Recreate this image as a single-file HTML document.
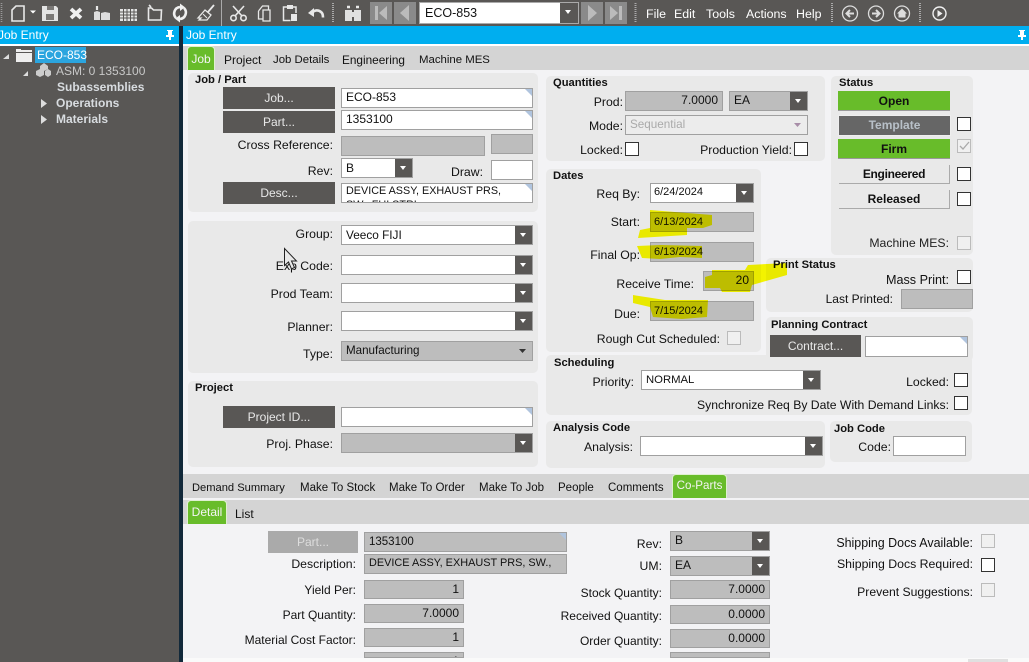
<!DOCTYPE html>
<html><head><meta charset="utf-8"><style>
html,body{margin:0;padding:0;overflow:hidden;width:1029px;height:662px}
body{font:12px "Liberation Sans",Arial,sans-serif;color:#111}
#root{position:absolute;left:0;top:0;width:1029px;height:662px;overflow:hidden;background:#f3f3f5}
#root div,#root svg{position:absolute;box-sizing:border-box}
.t{line-height:14px;white-space:nowrap;height:14px}
.l{line-height:14px;white-space:nowrap;height:14px;text-align:right;width:220px;font-size:12.25px}
.l.x{font-size:12px}
.h{font-weight:bold;font-size:11.2px;line-height:14px;white-space:nowrap;height:14px}
.p{background:#e9e9e9;border-radius:5px}
.b{background:#595755;color:#e8e8e8;text-align:center;line-height:22px;height:22px}
.f{background:#fff;border:1px solid #a0a0a0;padding:0 4px;line-height:17px;white-space:nowrap;overflow:hidden;height:20px}
.g{background:#bdbdbd;border:1px solid #a0a0a0;padding:0 4px;line-height:17px;white-space:nowrap;overflow:hidden;height:20px}
.r{text-align:right}
.n:after{content:"";position:absolute;right:-1px;top:-1px;border-top:9px solid #b0c4de;border-left:9px solid transparent}
.a{position:absolute;right:0;top:0;bottom:0;width:17px;background:#595755}
.a:after{content:"";position:absolute;left:5px;top:7px;border-top:4px solid #fff;border-left:3.5px solid transparent;border-right:3.5px solid transparent}
.c{width:14px;height:14px;background:#fff;border:1px solid #333}
.d{width:14px;height:14px;background:#f0f0f0;border:1px solid #bbb}
.w{color:#fff}
.tab{background:#68bc2a;border:1px solid #dff0d0;border-bottom:none;border-radius:4px 4px 0 0;color:#f4f4f4;text-align:center}
.s{font-weight:bold;text-align:center}
.m{font-weight:bold;color:#d8dce0}
.dt{font-size:11px;padding-left:3px}
</style></head><body><div id="root">

<!-- toolbar -->
<div style="left:0;top:0;width:1029px;height:26px;background:#595755"></div>
<svg style="left:0;top:0" width="420" height="26" fill="none" stroke="#e8e8e8" stroke-width="1.6">
<path d="M1.500 3v19" stroke="#999" stroke-dasharray="1 1"/>
<path d="M16 6h8v15H12V10z"/><path d="M30 10.500h6l-3 3z" fill="#fff" stroke="none"/>
<path d="M42 6h14l2 2v13H42z" fill="#e4e4e4" stroke="none"/><path d="M47 6h7v4h-7zM46 14h8v6h-8z" fill="#7a7876" stroke="none"/>
<path d="M71 9l10 9M81 9l-10 9" stroke-width="3.800" stroke="#f0f0f0"/>
<path d="M94 12l3-1 3 1v8h-6zM101 13l4-1 5 1v7h-9z" fill="#ddd" stroke="none"/><path d="M97 6v4" stroke-width="2.200"/>
<rect x="120" y="9" width="17" height="12" fill="#e4e4e4" stroke="none"/>
<path d="M120 12h17M120 15h17M120 18h17M123.500 9v12M127 9v12M130.500 9v12M134 9v12" stroke="#595755" stroke-width="1"/>
<path d="M148.500 8v12h12.500l.5-10h-8l-2-2zM149 5l2 2"/>
<path d="M176 18A6.500 6.500 0 0 1 180 7M184 8A6.500 6.500 0 0 1 180 19" stroke-width="2.600" stroke="#f0f0f0"/><path d="M180 3.500v7.500l5-3.700zM180 15v7.500l-5-3.700z" fill="#f0f0f0" stroke="none"/>
<path d="M214 5l-6 7" stroke-width="1.800"/><path d="M205 10l6 5-4 5h-8l2-2-3 0z" stroke-width="1.300"/><path d="M203 14l4 4" stroke-width="1"/>
<path d="M221.500 0v26" stroke="#aaa" stroke-width="1"/>
<path d="M233 6l9 10M244 6l-9 10" stroke-width="1.600"/><circle cx="233.500" cy="18" r="2.700"/><circle cx="243.500" cy="18" r="2.700"/>
<path d="M258.500 11l4-5h6v4M258.500 11v8h4" stroke-width="1.300"/><path d="M263 10h7v11h-7z" stroke-width="1.300"/>
<path d="M287 7h-3.500v13.500h7M293 7h3v6" stroke-width="1.500"/><path d="M287 5h6v4h-6zM291 14h6v7h-6z" fill="#e8e8e8" stroke="none"/>
<path d="M312 13a6 6 0 0 1 9-1c1.500 1 2 3 2 5.500" stroke-width="2.600"/><path d="M308 13l6-5v9z" fill="#e8e8e8" stroke="none"/>
<path d="M333 3v20" stroke="#aaa" stroke-dasharray="1 1" stroke-width="2"/>
<path d="M345 10h7v11h-7zM354 10h7v11h-7zM352 12h2v5h-2z" fill="#e0e0e0" stroke="none"/><path d="M347 7h3M356 7h3" stroke-width="2.400"/>
</svg>
<div style="left:370px;top:2px;width:22px;height:22px;background:#8a8a8a"></div>
<div style="left:394px;top:2px;width:22px;height:22px;background:#8a8a8a"></div>
<svg style="left:370px;top:2px" width="46" height="22" fill="#bbb"><path d="M5 4h3v14H5zM17 4v14l-8-7zM39 3v16l-9-8z"/></svg>
<div style="left:419px;top:2px;width:160px;height:22px;background:#fff;border:1px solid #aaa"><div class="t" style="left:5px;top:3px;font-size:12.500px;color:#111">ECO-853</div><div class="a" style="width:18px"></div></div>
<div style="left:581px;top:2px;width:22px;height:22px;background:#8a8a8a"></div>
<div style="left:605px;top:2px;width:22px;height:22px;background:#8a8a8a"></div>
<svg style="left:581px;top:2px" width="46" height="22" fill="#bbb"><path d="M7 3v16l9-8zM29 4v14l8-7zM38 4h3v14h-3z"/></svg>
<svg style="left:630px;top:0" width="399" height="26" fill="none" stroke="#ddd">
<path d="M5.500 3v20M202 3v20M290 3v20" stroke-dasharray="1 1" stroke-width="2" stroke="#aaa"/>
<circle cx="220" cy="13.500" r="7.500" stroke-width="1.300"/><path d="M224 13.500h-7M220 10l-3.500 3.500 3.500 3.500" stroke-width="2"/>
<circle cx="246" cy="13.500" r="7.500" stroke-width="1.300"/><path d="M242 13.500h7M246 10l3.500 3.500-3.500 3.500" stroke-width="2"/>
<circle cx="272" cy="13.500" r="7.500" stroke-width="1.300"/><path d="M272 8.500l-5 5h1.500v4h7v-4h1.500z" fill="#ddd" stroke="none"/>
<circle cx="309.500" cy="13.500" r="6.500" stroke-width="1.400" stroke="#f0f0f0"/><path d="M307.500 10v7l5-3.500z" fill="#f0f0f0" stroke="none"/>
</svg>
<div class="t w" style="left:646px;top:7px;font-size:12.400px">File</div>
<div class="t w" style="left:674px;top:7px;font-size:12.400px">Edit</div>
<div class="t w" style="left:706px;top:7px;font-size:12.400px">Tools</div>
<div class="t w" style="left:746px;top:7px;font-size:12.400px">Actions</div>
<div class="t w" style="left:796px;top:7px;font-size:12.400px">Help</div>

<!-- left panel -->
<div style="left:0;top:26px;width:179px;height:636px;background:#595755"></div>
<div style="left:179px;top:26px;width:4px;height:636px;background:#12293a"></div>
<div style="left:0;top:26px;width:179px;height:18px;background:#00aeef"></div>
<div style="left:0;top:44px;width:179px;height:2px;background:#fff"></div>
<div class="t w" style="left:-2px;top:28px">Job Entry</div>
<svg style="left:164px;top:29px" width="12" height="12" fill="#fff"><path d="M3 1h6v1H8v4h2v2H7v3H5V8H2V6h2V2H3z"/></svg>
<svg style="left:0;top:46px" width="60" height="80">
<path d="M9 8v5H3z" fill="#ddd"/><path d="M28 25v5h-5z" fill="#ddd"/>
<path d="M16 3h5v1h11v2H16zM16 7h16v9H16z" fill="#eee"/>
<path d="M36 25l4-2 4 2v4l-4 2-4-2zM40 20l4-3 4 3v3l-4 2-4-2zM45 25l3-2 3 2v4l-3 2-3-2z" fill="#ccc"/>
<path d="M41 53l6 4.500-6 4.500zM41 69l6 4.500-6 4.500z" fill="#ddd"/>
</svg>
<div style="left:35px;top:47px;width:51px;height:16px;background:#2ba5df"></div>
<div class="t w" style="left:37px;top:48px">ECO-853</div>
<div class="t" style="left:56px;top:64px;color:#c8c8c8">ASM: 0 1353100</div>
<div class="t m" style="left:57px;top:80px">Subassemblies</div>
<div class="t m" style="left:56px;top:96px">Operations</div>
<div class="t m" style="left:56px;top:112px">Materials</div>

<!-- main header -->
<div style="left:183px;top:26px;width:846px;height:18px;background:#00aeef"></div>
<div style="left:183px;top:44px;width:846px;height:2px;background:#fff"></div>
<div class="t w" style="left:186px;top:28px">Job Entry</div>
<svg style="left:1016px;top:29px" width="12" height="12" fill="#fff"><path d="M3 1h6v1H8v4h2v2H7v3H5V8H2V6h2V2H3z"/></svg>

<div style="left:183px;top:46px;width:846px;height:24px;background:#d4d4d4"></div>
<div class="tab" style="left:187px;top:46px;width:28px;height:24px;line-height:24px">Job</div>
<div class="t" style="left:224px;top:53px">Project</div>
<div class="t" style="left:273px;top:53px;font-size:11.400px">Job Details</div>
<div class="t" style="left:342px;top:53px;font-size:11.800px">Engineering</div>
<div class="t" style="left:419px;top:53px;font-size:11.400px">Machine MES</div>

<!-- Job / Part -->
<div class="p" style="left:188px;top:73px;width:350px;height:139px"></div>
<div class="h" style="left:195px;top:73px">Job / Part</div>
<div class="b" style="left:223px;top:87px;width:112px">Job...</div>
<div class="f n" style="left:341px;top:88px;width:192px">ECO-853</div>
<div class="b" style="left:223px;top:111px;width:112px">Part...</div>
<div class="f n" style="left:341px;top:110px;width:192px">1353100</div>
<div class="l" style="left:113px;top:138px">Cross Reference:</div>
<div class="g" style="left:341px;top:136px;width:144px"></div>
<div class="g" style="left:491px;top:134px;width:42px"></div>
<div class="l" style="left:113px;top:164px">Rev:</div>
<div class="f" style="left:341px;top:158px;width:72px;line-height:18px">B<div class="a"></div></div>
<div class="l" style="left:263px;top:165px">Draw:</div>
<div class="f" style="left:491px;top:160px;width:42px"></div>
<div class="b" style="left:223px;top:182px;width:112px">Desc...</div>
<div class="f n" style="left:341px;top:183px;width:192px;line-height:14px;white-space:normal;font-size:10.800px">DEVICE ASSY, EXHAUST PRS,<br>SW., FUI STRI</div>

<!-- Group -->
<div class="p" style="left:188px;top:221px;width:350px;height:152px"></div>
<div class="l" style="left:113px;top:227px">Group:</div>
<div class="f" style="left:341px;top:225px;width:192px;line-height:19px;font-size:11.800px">Veeco FIJI<div class="a"></div></div>
<div class="l" style="left:113px;top:259px">Exp Code:</div>
<div class="f" style="left:341px;top:255px;width:192px"><div class="a"></div></div>
<div class="l" style="left:113px;top:287px">Prod Team:</div>
<div class="f" style="left:341px;top:283px;width:192px"><div class="a"></div></div>
<div class="l" style="left:113px;top:320px">Planner:</div>
<div class="f" style="left:341px;top:311px;width:192px"><div class="a"></div></div>
<div class="l" style="left:113px;top:347px">Type:</div>
<div class="g" style="left:341px;top:341px;width:192px;font-size:11.600px;line-height:18px">Manufacturing<svg style="right:6px;top:7px" width="7" height="4" fill="#333"><path d="M0 0h7L3.500 4z"/></svg></div>

<!-- Project -->
<div class="p" style="left:188px;top:381px;width:350px;height:86px"></div>
<div class="h" style="left:195px;top:381px">Project</div>
<div class="b" style="left:223px;top:406px;width:112px">Project ID...</div>
<div class="f n" style="left:341px;top:407px;width:192px"></div>
<div class="l" style="left:113px;top:437px">Proj. Phase:</div>
<div class="g" style="left:341px;top:433px;width:192px"><div class="a"></div></div>

<!-- Quantities -->
<div class="p" style="left:546px;top:76px;width:279px;height:85px"></div>
<div class="h" style="left:553px;top:76px">Quantities</div>
<div class="l" style="left:403px;top:95px">Prod:</div>
<div class="g r" style="left:625px;top:91px;width:98px">7.0000</div>
<div class="g" style="left:729px;top:91px;width:79px">EA<div class="a"></div></div>
<div class="l" style="left:403px;top:119px">Mode:</div>
<div class="f" style="left:625px;top:115px;width:183px;background:#ececec;color:#aaa;font-size:11.700px;line-height:18px">Sequential<svg style="right:6px;top:7px" width="7" height="4" fill="#a88ea8"><path d="M0 0h7L3.500 4z"/></svg></div>
<div class="l" style="left:403px;top:143px">Locked:</div>
<div class="c" style="left:625px;top:142px"></div>
<div class="l" style="left:572px;top:143px">Production Yield:</div>
<div class="c" style="left:794px;top:142px"></div>

<!-- Dates -->
<div class="p" style="left:546px;top:169px;width:215px;height:183px"></div>
<div class="h" style="left:553px;top:169px">Dates</div>
<div class="l" style="left:420px;top:187px">Req By:</div>
<div class="f dt" style="left:650px;top:183px;width:104px">6/24/2024<div class="a"></div></div>
<div class="l" style="left:420px;top:215px">Start:</div>
<div class="g dt" style="left:650px;top:212px;width:104px;line-height:18px">6/13/2024</div>
<div class="l" style="left:420px;top:248px">Final Op:</div>
<div class="g dt" style="left:650px;top:242px;width:104px;line-height:18px">6/13/2024</div>
<div class="l" style="left:474px;top:277px">Receive Time:</div>
<div class="g r" style="left:703px;top:271px;width:51px">20</div>
<div class="l" style="left:420px;top:307px">Due:</div>
<div class="g dt" style="left:650px;top:301px;width:104px;line-height:18px">7/15/2024</div>
<div class="l" style="left:500px;top:332px">Rough Cut Scheduled:</div>
<div class="d" style="left:727px;top:331px"></div>

<!-- Scheduling -->
<div class="p" style="left:546px;top:355px;width:426px;height:60px"></div>
<div class="h" style="left:554px;top:356px">Scheduling</div>
<div class="l" style="left:414px;top:375px">Priority:</div>
<div class="f" style="left:641px;top:370px;width:180px;font-size:11.300px;line-height:18px">NORMAL<div class="a"></div></div>
<div class="l" style="left:729px;top:375px">Locked:</div>
<div class="c" style="left:954px;top:373px"></div>
<div class="l" style="left:649px;top:398px;width:300px;font-size:12.200px">Synchronize Req By Date With Demand Links:</div>
<div class="c" style="left:954px;top:396px"></div>

<!-- Analysis -->
<div class="p" style="left:546px;top:421px;width:279px;height:47px"></div>
<div class="h" style="left:553px;top:421px">Analysis Code</div>
<div class="l" style="left:413px;top:440px">Analysis:</div>
<div class="f" style="left:640px;top:436px;width:183px"><div class="a"></div></div>
<div class="p" style="left:830px;top:421px;width:142px;height:41px"></div>
<div class="h" style="left:834px;top:422px">Job Code</div>
<div class="l" style="left:671px;top:440px">Code:</div>
<div class="f" style="left:893px;top:436px;width:73px"></div>

<!-- Status -->
<div class="p" style="left:831px;top:76px;width:142px;height:179px"></div>
<div class="h" style="left:839px;top:76px">Status</div>
<div class="s" style="left:838px;top:91px;width:112px;height:20px;line-height:20px;background:#68bc2a;border-bottom:1px solid #999">Open</div>
<div class="s" style="left:838px;top:115px;width:113px;height:21px;line-height:19px;background:#666;border:1px solid #eee;color:#b8c0c8">Template</div>
<div class="c" style="left:957px;top:117px"></div>
<div class="s" style="left:838px;top:139px;width:112px;height:20px;line-height:20px;background:#68bc2a;border-bottom:1px solid #999">Firm</div>
<div class="d" style="left:957px;top:139px"></div>
<svg style="left:959px;top:141px" width="11" height="10" fill="none" stroke="#aaa" stroke-width="1.300"><path d="M1 5l3 3 6-7"/></svg>
<div class="s" style="left:839px;top:165px;width:111px;height:19px;line-height:18px;border-right:1px solid #aaa;border-bottom:1px solid #aaa;letter-spacing:-.3px">Engineered</div>
<div class="c" style="left:957px;top:167px"></div>
<div class="s" style="left:839px;top:190px;width:111px;height:19px;line-height:18px;border-right:1px solid #aaa;border-bottom:1px solid #aaa">Released</div>
<div class="c" style="left:957px;top:192px"></div>
<div class="l" style="left:729px;top:236px;color:#222">Machine MES:</div>
<div class="d" style="left:957px;top:236px"></div>

<!-- Print status -->
<div class="p" style="left:766px;top:258px;width:207px;height:54px"></div>
<div class="h" style="left:773px;top:258px">Print Status</div>
<div class="l" style="left:729px;top:273px;font-size:12.600px">Mass Print:</div>
<div class="c" style="left:957px;top:270px"></div>
<div class="l x" style="left:673px;top:292px">Last Printed:</div>
<div class="g" style="left:901px;top:289px;width:72px"></div>

<!-- Planning -->
<div class="p" style="left:766px;top:317px;width:207px;height:44px"></div>
<div class="h" style="left:771px;top:318px">Planning Contract</div>
<div class="b" style="left:770px;top:335px;width:91px">Contract...</div>
<div class="f n" style="left:865px;top:336px;width:103px;height:21px"></div>

<!-- highlights -->
<svg style="left:0;top:0;mix-blend-mode:multiply" width="1029" height="662" fill="#ffff00">
<path d="M650 210L712 215 712 225 703 228 687 228 687 235 638 238 640 230 650 228z"/>
<path d="M637 246L660 245 702 246 702 258 680 257 660 259 642 258z"/>
<path d="M712 270L745 270 748 265 787 263 787 275 752 285 750 292 722 292 720 288 705 288 705 277 712 275z"/>
<path d="M633 295L665 300 708 300 707 317 682 319 653 317 650 307 633 303z"/>
</svg>

<!-- cursor -->
<svg style="left:283px;top:247px" width="16" height="26" fill="#e9e9e9" stroke="#222" stroke-width="1"><path d="M1.500 1.500v17l4-3.500 3 7 3-1.500-3-6.500h5z"/></svg>

<!-- lower tabs -->
<div style="left:183px;top:474px;width:846px;height:24px;background:#d4d4d4"></div>
<div style="left:183px;top:500px;width:846px;height:24px;background:#d4d4d4"></div>
<div class="t" style="left:192px;top:481px;font-size:11.150px">Demand Summary</div>
<div class="t" style="left:300px;top:481px;font-size:11.500px">Make To Stock</div>
<div class="t" style="left:389px;top:481px;font-size:11.500px">Make To Order</div>
<div class="t" style="left:479px;top:481px;font-size:11.500px">Make To Job</div>
<div class="t" style="left:558px;top:481px;font-size:11.500px">People</div>
<div class="t" style="left:608px;top:481px;font-size:11.500px">Comments</div>
<div class="tab" style="left:672px;top:474px;width:55px;height:24px;line-height:22px;font-size:11.600px">Co-Parts</div>
<div class="tab" style="left:187px;top:500px;width:40px;height:24px;line-height:23px">Detail</div>
<div class="t" style="left:235px;top:507px">List</div>

<!-- Detail -->
<div class="b" style="left:268px;top:531px;width:90px;background:#aaa;color:#ddd">Part...</div>
<div class="g n" style="left:364px;top:532px;width:203px;font-size:11.500px;line-height:18px">1353100</div>
<div class="l" style="left:136px;top:557px">Description:</div>
<div class="g" style="left:364px;top:554px;width:203px;font-size:10.900px;line-height:16px">DEVICE ASSY, EXHAUST PRS, SW.,</div>
<div class="l x" style="left:136px;top:583px">Yield Per:</div>
<div class="g r" style="left:364px;top:580px;width:100px;height:19px;line-height:17px">1</div>
<div class="l x" style="left:136px;top:608px">Part Quantity:</div>
<div class="g r" style="left:364px;top:604px;width:100px;height:19px;line-height:17px">7.0000</div>
<div class="l x" style="left:136px;top:633px">Material Cost Factor:</div>
<div class="g r" style="left:364px;top:628px;width:100px;height:19px;line-height:17px">1</div>
<div class="g r" style="left:364px;top:652px;width:100px;height:6px;line-height:17px">1</div>
<div class="l" style="left:442px;top:537px">Rev:</div>
<div class="g" style="left:670px;top:531px;width:100px">B<div class="a"></div></div>
<div class="l" style="left:442px;top:559px">UM:</div>
<div class="g" style="left:670px;top:556px;width:100px">EA<div class="a"></div></div>
<div class="l x" style="left:442px;top:586px">Stock Quantity:</div>
<div class="g r" style="left:670px;top:580px;width:100px;height:19px;line-height:17px">7.0000</div>
<div class="l x" style="left:442px;top:609px">Received Quantity:</div>
<div class="g r" style="left:670px;top:605px;width:100px;height:19px;line-height:17px">0.0000</div>
<div class="l x" style="left:442px;top:634px">Order Quantity:</div>
<div class="g r" style="left:670px;top:629px;width:100px;height:19px;line-height:17px">0.0000</div>
<div class="g" style="left:670px;top:652px;width:100px;height:6px"></div>
<div class="l" style="left:753px;top:536px;font-size:12.450px">Shipping Docs Available:</div>
<div class="d" style="left:981px;top:534px"></div>
<div class="l" style="left:753px;top:557px;font-size:12.300px">Shipping Docs Required:</div>
<div class="c" style="left:981px;top:558px"></div>
<div class="l" style="left:753px;top:585px;font-size:12.200px">Prevent Suggestions:</div>
<div class="d" style="left:981px;top:583px"></div>
<div style="left:183px;top:658px;width:846px;height:4px;background:#fafafa"></div>
<div style="left:968px;top:659px;width:40px;height:3px;background:#e0e0e0"></div>
</div></body></html>
